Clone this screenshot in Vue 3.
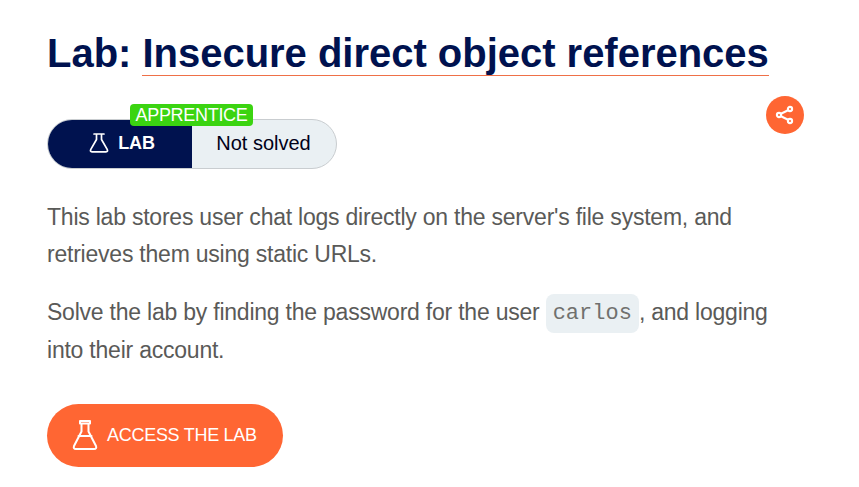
<script setup>
</script>

<template>
  <main class="page">
    <h1 class="title">Lab: <span class="topic">Insecure direct object references</span></h1>
    <div class="meta">
      <div class="status">
        <div class="kind">
          <svg class="flask" viewBox="0 0 20 20"><path d="M5 1h10M7.500 1v5.500L1.800 16.400q-1.100 2.400 1.200 2.400h14q2.300 0 1.200-2.400L12.500 6.500V1" /></svg>
          <span>LAB</span>
        </div>
        <div class="state">Not solved</div>
        <span class="level">APPRENTICE</span>
      </div>
      <button class="share" aria-label="Share">
        <svg viewBox="0 0 20 20"><path d="M6 8.800L13 5.200M6 11.200l7 3.600" /><circle cx="15" cy="4" r="2.100" /><circle cx="4" cy="10" r="2.100" /><circle cx="15" cy="16" r="2.100" /></svg>
      </button>
    </div>
    <p class="intro">This lab stores user chat logs directly on the server's file system, and<br />retrieves them using static URLs.</p>
    <p>Solve the lab by finding the password for the user <code>carlos</code>, and logging<br />into their account.</p>
    <button class="access">
      <svg class="flask" viewBox="0 0 26 32"><path d="M8 2h10v2.500H8ZM9.500 4.500v8L2 27q-1 3 2 3h18q3 0 2-3L16.500 12.500v-8M6.500 17h13" /></svg>
      <span>ACCESS THE LAB</span>
    </button>
  </main>
</template>

<style>
body { background: #fff; }
</style>
<style scoped>
.page { box-sizing: border-box; width: 859px; height: 487px; padding: 30px 55px 0 47px; font-family: "Liberation Sans", Arial, sans-serif; color: #5a5a58; overflow: hidden; }
.title { margin: 0; font-size: 40px; line-height: 46px; letter-spacing: -0.02px; color: #00124f; white-space: nowrap; }
.topic { display: inline-block; height: 45px; padding-right: 0.5px; border-bottom: 1px solid #ef7048; }
.meta { display: flex; justify-content: space-between; align-items: flex-start; height: 74px; margin-top: 20px; }
.status { position: relative; box-sizing: border-box; display: flex; width: 290px; height: 50px; margin-top: 23px; border: 1px solid #c9cdd0; border-radius: 25px; background: #eaf0f3; }
.kind { display: flex; align-items: center; justify-content: center; gap: 9px; width: 144px; padding: 0 0 2px 4px; box-sizing: border-box; border-radius: 24px 0 0 24px; background: #00124f; color: #fff; font-size: 18px; letter-spacing: -0.2px; font-weight: bold; }
.kind .flask { width: 20px; height: 20px; stroke-width: 1.7; }
.state { width: 143px; text-align: center; font-size: 20px; line-height: 46px; color: #000018; }
.level { position: absolute; left: 82px; top: -16px; width: 123px; height: 22px; border-radius: 4px; background: #3bd411; color: #fff; font-size: 18px; letter-spacing: -0.3px; line-height: 22px; text-align: center; }
svg { fill: none; stroke: #fff; stroke-width: 2; stroke-linecap: round; stroke-linejoin: round; }
.share { display: flex; align-items: center; justify-content: center; width: 38px; height: 38px; padding: 0; border: 0; border-radius: 50%; background: #ff6633; }
.share svg { width: 20px; height: 20px; stroke-width: 2.1; }
p { margin: 29px 0 0; font-size: 23px; letter-spacing: -0.225px; line-height: 37.5px; white-space: nowrap; }
.intro { line-height: 37px; }
.intro + p { margin-top: 21px; }
code { display: inline-block; height: 39px; margin: -2px 0; padding: 2px 7px 0; box-sizing: border-box; vertical-align: middle; border-radius: 8px; background: #eaf0f3; color: #70706e; font: 22px/36px "Courier New", "Liberation Mono", monospace; letter-spacing: 0; }
.access { display: flex; align-items: center; box-sizing: border-box; width: 236px; height: 63px; margin-top: 35px; padding: 0 25px 1px; gap: 9px; border: 0; border-radius: 32px; background: #ff6633; color: #fff; font: 18px "Liberation Sans", Arial, sans-serif; letter-spacing: -0.28px; white-space: nowrap; }
.access .flask { width: 26px; height: 32px; flex: none; }
</style>
